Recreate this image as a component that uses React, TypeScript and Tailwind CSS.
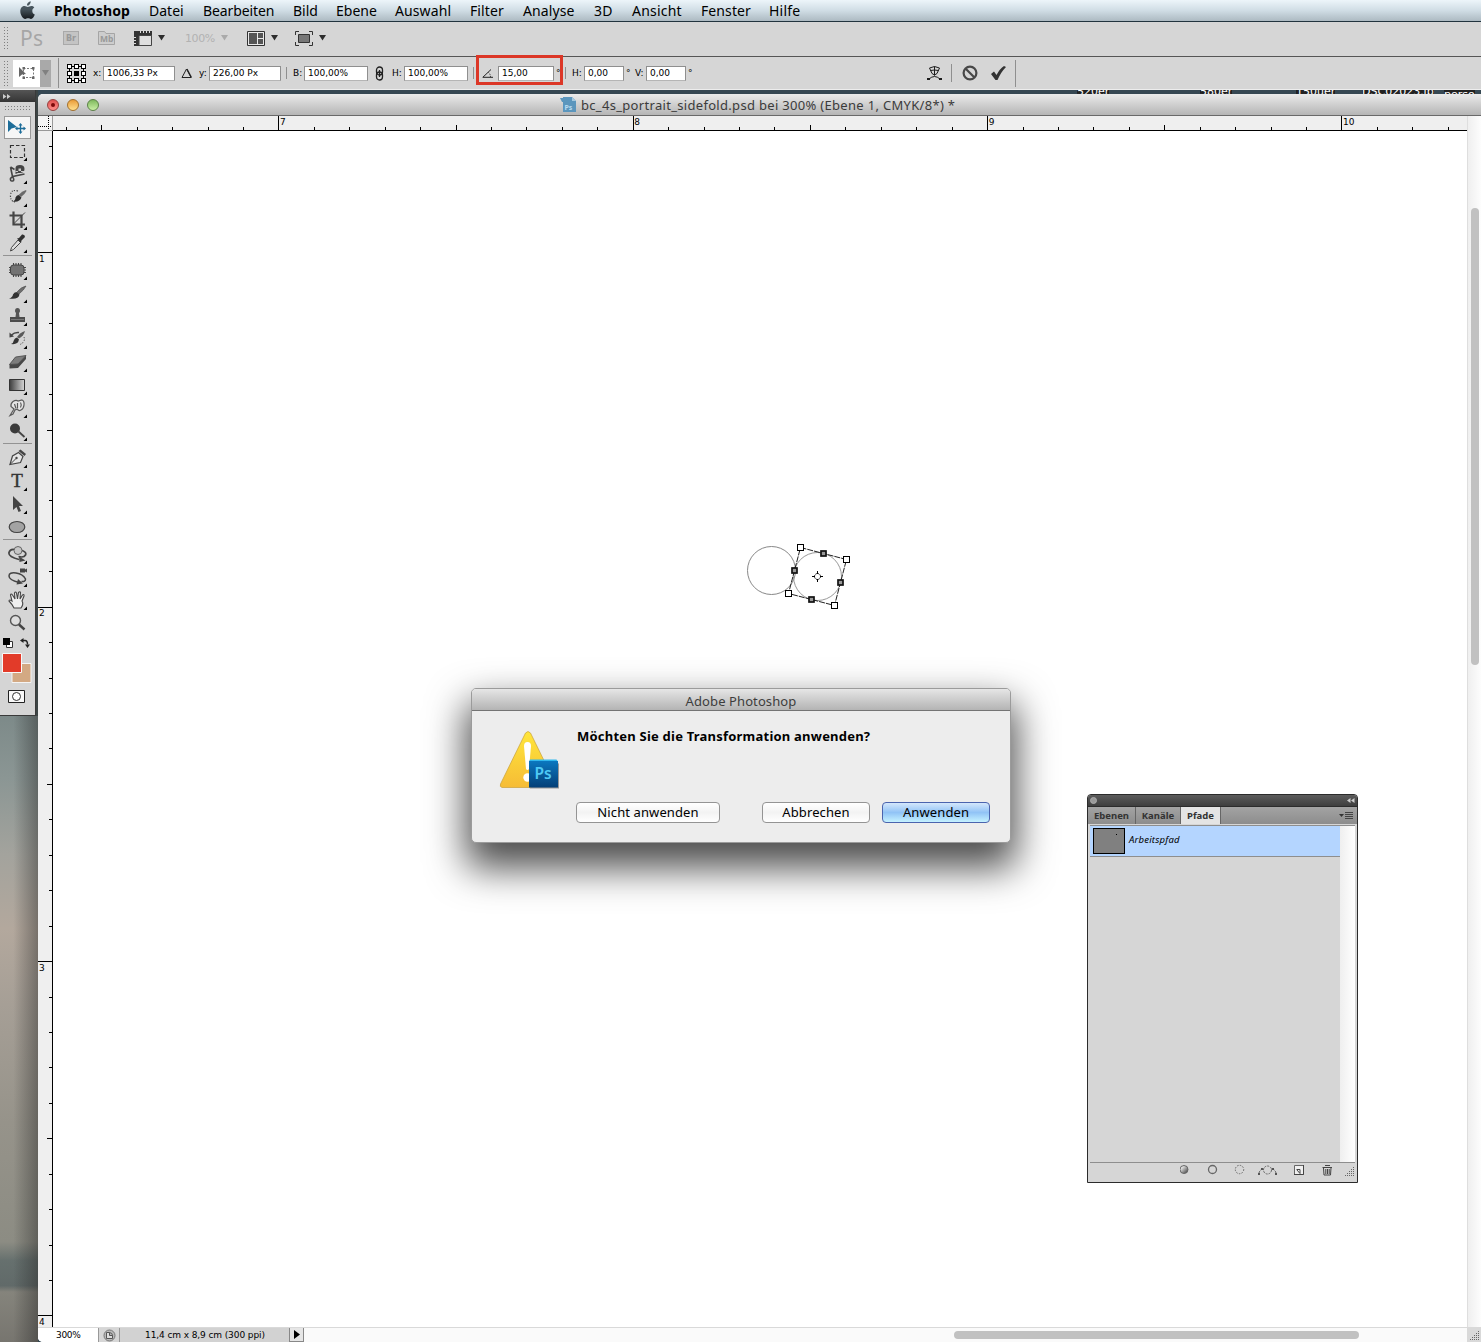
import React from 'react';

const MENU_ITEMS = [
  { label: 'Photoshop', width: 'w-[76px] font-bold tracking-[0.1px]' },
  { label: 'Datei', width: 'w-[35px]' },
  { label: 'Bearbeiten', width: 'w-[71px] tracking-[-0.1px]' },
  { label: 'Bild', width: 'w-[24px]' },
  { label: 'Ebene', width: 'w-[40px]' },
  { label: 'Auswahl', width: 'w-[56px] tracking-[0.1px]' },
  { label: 'Filter', width: 'w-[34px] tracking-[0.1px]' },
  { label: 'Analyse', width: 'w-[52px] tracking-[0.1px]' },
  { label: '3D', width: 'w-[19px] tracking-[0.3px]' },
  { label: 'Ansicht', width: 'w-[50px] tracking-[0.2px]' },
  { label: 'Fenster', width: 'w-[49px] tracking-[0.1px]' },
  { label: 'Hilfe', width: 'w-[31px] tracking-[0.2px]' },
];

const SMALL = "font-['DejaVu_Sans','Liberation_Sans',sans-serif]";

function MenuBar() {
  return (
    <header className="flex h-[22px] shrink-0 items-center border-b border-[#22343f] bg-linear-to-b from-[#edf5fa] via-[#d0dde5] to-[#adbac2] pl-[19px]">
      <svg className="mr-[18px] h-[19px] w-[17px]" viewBox="0 0 17 19">
        <defs>
          <linearGradient id="apple" x1="0" y1="0" x2="0" y2="1">
            <stop offset="0" stopColor="#4b5960" />
            <stop offset=".45" stopColor="#46545c" />
            <stop offset="1" stopColor="#15191c" />
          </linearGradient>
        </defs>
        <path
          fill="url(#apple)"
          d="M11.700.3c.1 1.200-.4 2.300-1.100 3.100-.7.800-1.700 1.300-2.600 1.200-.1-1.100.4-2.200 1-2.900C9.700.9 10.800.4 11.700.3zM15.300 6.500c-1.300.8-2 1.900-2 3.400 0 1.700 1 3 2.500 3.600-.6 1.900-2.200 4.500-3.800 4.500-1.100 0-1.500-.7-2.900-.7s-1.900.7-2.900.7C4 18 1.300 14 1.300 10.300c0-3.400 2.200-5.200 4.200-5.200 1.300 0 2.500.9 3.300.9.800 0 2.100-1 3.700-1 .8 0 2.100.3 2.800 1.500z"
        />
      </svg>
      <nav className="flex gap-[19px] text-[14px] leading-[21px] text-black">
        {MENU_ITEMS.map((item) => (
          <span key={item.label} className={`whitespace-nowrap ${item.width}`}>
            {item.label}
          </span>
        ))}
      </nav>
    </header>
  );
}

function Grip({ className }: { className: string }) {
  return (
    <div
      className={`bg-[radial-gradient(#808080_0.6px,transparent_0.9px)] bg-[size:3px_3px] ${className}`}
    />
  );
}

function DropArrow({ className = 'fill-[#2e2e2e]' }: { className?: string }) {
  return (
    <svg className={`h-[6px] w-[7px] ${className}`} viewBox="0 0 7 6">
      <path d="M0 0h7L3.500 5.500z" />
    </svg>
  );
}

function AppBar() {
  return (
    <div className="flex h-[35px] shrink-0 items-center border-b border-[#565656] bg-[#d6d6d6] pb-[2px]">
      <Grip className="ml-[3px] h-[24px] w-[6px]" />
      <span className="ml-[11px] w-[43px] text-[21px] leading-[30px] tracking-[0.3px] text-[#a6a6a6]">Ps</span>
      <span className={`flex h-[14px] w-[16px] items-center justify-center border border-[#a9a9a9] bg-[#c4c4c4] pt-px text-[8px] font-bold text-[#999] ${SMALL}`}>
        Br
      </span>
      <svg className="ml-[18px] h-[16px] w-[19px]" viewBox="0 0 19 16">
        <path d="M1.500 14.500v-13h6l1.500 2h8.500v11z" fill="#cdcdcd" stroke="#a5a5a5" />
        <text x="3" y="12" fontSize="8.500" fontWeight="bold" fill="#999">Mb</text>
      </svg>
      <svg className="ml-[18px] h-[15px] w-[19px]" viewBox="0 0 19 15">
        <path d="M0 0h18v5H5v10H0z" fill="#333" />
        <path d="M5 4.500h12.500v10H5z" fill="#dedede" stroke="#444" />
        <path d="M6.500 0v2M9.500 0v2M12.500 0v2M15.500 0v2M0 6.500h2M0 9.500h2M0 12.500h2" stroke="#ddd" />
      </svg>
      <span className="ml-[5px] flex w-[27px]"><DropArrow /></span>
      <span className={`w-[36px] pt-[2px] text-[11px] tracking-[-0.4px] text-[#b2b2b2] ${SMALL}`}>100%</span>
      <span className="flex w-[26px]"><DropArrow className="fill-[#aaa]" /></span>
      <svg className="h-[15px] w-[18px]" viewBox="0 0 18 15">
        <path d="M.5.5h17v14H.5z" fill="#e9e9e9" stroke="#333" />
        <path d="M2 2h8v11H2zM11 2h5v5h-5zM11 8h5v5h-5z" fill="#555" />
      </svg>
      <span className="ml-[6px] flex w-[24px]"><DropArrow /></span>
      <svg className="h-[15px] w-[18px]" viewBox="0 0 18 15">
        <path d="M.5 4V.5H4M14 .5h3.500V4M17.500 11v3.500H14M4 14.500H.5V11" fill="none" stroke="#333" />
        <path d="M3.500 3.500h11v8h-11z" fill="#777" stroke="#333" />
      </svg>
      <span className="ml-[6px] flex"><DropArrow /></span>
    </div>
  );
}

function Field({ value, className }: { value: string; className: string }) {
  return (
    <span className={`flex h-[15px] items-center border border-[#8f8f8f] border-b-[#b5b5b5] bg-white pt-[2px] pl-[3px] whitespace-nowrap text-black ${className}`}>
      {value}
    </span>
  );
}

function Divider({ className }: { className: string }) {
  return <span className={`w-px bg-[#8f8f8f] ${className}`} />;
}

const HANDLES = [
  [0, 0], [7, 0], [14, 0],
  [0, 7], [14, 7],
  [0, 14], [7, 14], [14, 14],
];

function OptionsBar() {
  return (
    <div className={`relative flex h-[33px] shrink-0 items-center border-b border-[#ededed] bg-[#d6d6d6] text-[9px] text-black ${SMALL}`}>
      <Grip className="ml-[3px] h-[27px] w-[6px]" />
      <div className="ml-[4px] flex h-[27px] w-[38px]">
        <div className="flex w-[27px] items-center justify-center bg-white">
          <svg className="h-[14px] w-[18px]" viewBox="0 0 18 14">
            <path d="M5.500 2.500h10v9h-10z" fill="none" stroke="#777" strokeDasharray="2 1.500" />
            <path d="M4.500 1h2.500v2.500H4.500zM14 1h2.500v2.500H14zM4.500 10.500h2.500v2.500H4.500zM14 10.500h2.500v2.500H14z" fill="#666" />
            <path d="M1 1v10l3-2.500 4-.5z" fill="#666" />
          </svg>
        </div>
        <div className="flex w-[11px] items-center justify-center bg-[#a9a9a9]">
          <DropArrow className="w-[5px] fill-[#808080]" />
        </div>
      </div>
      <Divider className="ml-[7px] h-[30px]" />
      <svg className="ml-[8px] h-[19px] w-[19px]" viewBox="0 0 19 19">
        <path d="M2.500 2.500h14v14h-14z" fill="none" stroke="#000" />
        {HANDLES.map(([x, y]) => (
          <rect key={`${x}-${y}`} x={x + 0.5} y={y + 0.5} width="4" height="4" fill="#fff" stroke="#000" />
        ))}
        <path d="M7 7h5v5H7z" />
      </svg>
      <span className="w-[17px] pt-px pl-[7px]">x:</span>
      <Field value="1006,33 Px" className="w-[72px]" />
      <span className="flex w-[24px] pl-[6px]">
        <svg className="h-[11px] w-[12px]" viewBox="0 0 12 11">
          <path d="M5.500 1L1 9.500h9z" fill="none" stroke="#222" />
          <path d="M6 1l4.500 8.500" stroke="#222" strokeWidth="1.200" />
        </svg>
      </span>
      <span className="w-[10px] pt-px">y:</span>
      <Field value="226,00 Px" className="w-[72px]" />
      <Divider className="ml-[5px] h-[12px]" />
      <span className="w-[17px] pt-px pl-[6px]">B:</span>
      <Field value="100,00%" className="w-[64px]" />
      <span className="flex w-[24px] pl-[7px]">
        <svg className="h-[15px] w-[9px]" viewBox="0 0 9 15">
          <rect x="1.500" y="1" width="6" height="8" rx="3" fill="none" stroke="#222" strokeWidth="1.300" />
          <rect x="1.500" y="6" width="6" height="8" rx="3" fill="none" stroke="#222" strokeWidth="1.300" />
          <path d="M4.500 4v7" stroke="#222" strokeWidth="1.300" />
        </svg>
      </span>
      <span className="w-[12px] pt-px">H:</span>
      <Field value="100,00%" className="w-[64px]" />
      <Divider className="ml-[5px] h-[12px]" />
      <svg className="ml-[8px] h-[9px] w-[12px]" viewBox="0 0 12 9">
        <path d="M9 .5L.8 8.300H11" fill="none" stroke="#222" />
        <path d="M6.500 3.500q2 1.500 2 5" fill="none" stroke="#222" strokeDasharray="1 1" />
      </svg>
      <Field value="15,00" className="ml-[4px] w-[56px]" />
      <span className="w-[11px] pt-px pl-[2px]">°</span>
      <Divider className="h-[12px]" />
      <span className="w-[18px] pt-px pl-[6px]">H:</span>
      <Field value="0,00" className="w-[40px]" />
      <span className="w-[11px] pt-px pl-[2px]">°</span>
      <span className="w-[11px] pt-px">V:</span>
      <Field value="0,00" className="w-[40px]" />
      <span className="w-[241px] pt-px pl-[2px]">°</span>
      <svg className="h-[16px] w-[15px]" viewBox="0 0 15 16" fill="none" stroke="#1c1c1c">
        <path d="M2.500 3Q7.500 0 12.500 3L10 8.500 7.500 10 5 8.500zM7.500 1.500v9M3.500 5.500Q7.500 4.500 11.500 5.500" />
        <path d="M2 14Q7.500 9 13 14" />
        <path d="M0 13h3v2H0zM12 13h3v2h-3z" fill="#1c1c1c" stroke="none" />
      </svg>
      <Divider className="ml-[9px] h-[18px]" />
      <svg className="ml-[10px] h-[16px] w-[16px]" viewBox="0 0 16 16">
        <circle cx="8" cy="8" r="6.400" fill="none" stroke="#484848" strokeWidth="2.200" />
        <path d="M3.500 3.500l9 9" stroke="#484848" strokeWidth="2.200" />
      </svg>
      <svg className="ml-[12px] h-[16px] w-[17px]" viewBox="0 0 17 16">
        <path d="M1 9l3-2.500L6.500 10Q10 3.500 14 1l2 1Q11 7 7.500 15H5.500z" fill="#333" />
      </svg>
      <Divider className="ml-[8px] h-[27px]" />
      {/* highlight around the angle input */}
      <div className="absolute top-[-2px] left-[476px] h-[30px] w-[87px] border-[3px] border-[#dc3727]" />
    </div>
  );
}

function DesktopPeek() {
  return (
    <div className={`flex h-[4px] w-full overflow-hidden bg-[#364853] pl-[1039px] text-[11px] leading-[12px] text-white ${SMALL}`}>
      <span className="-mt-[4px] h-[12px] w-[123px]"><span className="bg-[#222]">520er</span></span>
      <span className="-mt-[4px] h-[12px] w-[96px]"><span className="bg-[#222]">580er</span></span>
      <span className="-mt-[4px] h-[12px] w-[66px]"><span className="bg-[#222]">150uer</span></span>
      <span className="-mt-[4px] h-[12px] w-[82px]"><span className="bg-[#222]">DSC02023.jp</span></span>
      <span className="-mt-[1px] h-[12px]"><span className="bg-[#222]">perso</span></span>
    </div>
  );
}

const D = '#454545';

// glyphs share a 22x22 grid
const TOOL_GROUPS: { name: string; art: React.ReactNode; plain?: boolean }[][] = [
  [
    {
      name: 'move',
      plain: true,
      art: (
        <>
          <path d="M3 3v12l3.500-3.500L12 10z" fill="#1d6d99" />
          <path d="M15.500 7.500v8M11.500 11.500h8" stroke="#1d6d99" strokeWidth="1.300" />
          <path d="M15.500 6l2 2.500h-4zM15.500 17l2-2.500h-4zM10 11.500l2.500-2v4zM21 11.500l-2.500-2v4z" fill="#1d6d99" />
        </>
      ),
    },
    { name: 'marquee', art: <path d="M4.500 5.500h14v12h-14z" fill="none" stroke="#333" strokeWidth="1.200" strokeDasharray="3.500 2" /> },
    {
      name: 'lasso',
      art: (
        <>
          <path d="M4.500 4l4 2.500M4.500 4l2 9.500 12-2.500M6.500 13.500l-2 2q-.5 3 2 2.500t0-4.500" fill="none" stroke={D} strokeWidth="1.600" />
          <path d="M9.500 11V5q0-3 4.500-3t4.500 4-4.500 4H12z" fill={D} />
          <path d="M12.500 8V5.500h2.500V8z" fill="#ccc" />
          <path d="M9.500 8.500h2.500M15 8.500h3" stroke="#ccc" />
        </>
      ),
    },
    {
      name: 'quick selection',
      art: (
        <>
          <path d="M12 5q-7-2-7.500 4T9 16" fill="none" stroke={D} strokeWidth="1.200" strokeDasharray="1.200 1.400" />
          <path d="M20 4q-4 1-7.500 5l2.500 2q4-3 5.500-6z" fill="#6a6a6a" />
          <path d="M12.500 9l3 2.500q-1.500 5-9 4 3-1 3-4 1-2.500 3-2.500z" fill="#2e2e2e" />
        </>
      ),
    },
    {
      name: 'crop',
      art: (
        <>
          <path d="M7.500 2.500v13H19M3.500 6.500h12V19" fill="none" stroke={D} strokeWidth="2.200" />
          <path d="M7.500 15L19 3.500" stroke={D} />
        </>
      ),
    },
    {
      name: 'eyedropper',
      art: (
        <>
          <path d="M12 8l2.500 2.500-7 7-3 1.500 1-3.500z" fill="#ddd" stroke={D} />
          <path d="M11 6.500l2-.5 3-3.500q3-.5 3 2.500L15.500 8.500l-.5 2.500z" fill="#303030" />
        </>
      ),
    },
  ],
  [
    {
      name: 'patch',
      art: (
        <>
          <path d="M7.500 4v14M10 4v14M12.500 4v14M15 4v14M3 8.500h17M3 11h17M3 13.500h17" stroke={D} strokeWidth="1.100" />
          <rect x="4.500" y="6" width="13.500" height="10" rx="3" fill="#737373" stroke="#444" />
        </>
      ),
    },
    {
      name: 'brush',
      art: (
        <>
          <path d="M20 4q-5 1-9 6l2 2q5-4 7-8z" fill="#6d6d6d" stroke={D} strokeWidth=".6" />
          <path d="M10.500 10l3 2.500q-1 5.500-10.500 4 3.500-1 4-4 1-2.500 3.500-2.500z" fill="#333" />
        </>
      ),
    },
    {
      name: 'stamp',
      art: (
        <>
          <path d="M9 6q0-3 2.500-3T14 6q0 1-1 2l.5 4h-4L10 8Q9 7 9 6z" fill="#555" />
          <path d="M4 12h15v5H4z" fill="#4c4c4c" />
          <path d="M5 14.500h13" stroke="#777" />
        </>
      ),
    },
    {
      name: 'history brush',
      art: (
        <>
          <path d="M19 3q-5 1.500-8 6l2 1.500q5-3 6-7.500z" fill="#5a5a5a" />
          <path d="M11 9.500l2 2q-1 5.500-8 4.500 2.500-1 3-4 .5-2 3-2.500z" fill="#333" />
          <path d="M5.500 7q3-3 7.500-2.500" fill="none" stroke={D} strokeWidth="1.500" />
          <path d="M3.500 4.500V9.500l4.500-1z" fill={D} />
          <path d="M18 9q2 5-5 8" fill="none" stroke={D} strokeDasharray="1.200 1.500" />
        </>
      ),
    },
    {
      name: 'eraser',
      art: (
        <>
          <path d="M3.500 13.500L9.500 6 20 4.500 12 13z" fill="#7d7d7d" stroke={D} strokeWidth=".8" />
          <path d="M3.500 13.500L12 13v4l-8.500.5zM12 13l8-8.500V8l-8 9z" fill="#484848" />
        </>
      ),
    },
    { name: 'gradient', art: <path d="M3.500 5.500h15v11h-15z" fill="url(#toolGradient)" stroke="#333" /> },
    {
      name: 'smudge',
      art: (
        <path
          d="M4 18.500L8 12 5 9.500q-.5-3 2-5Q10 2.500 12 4l4-1q2.500 1 2 5-.5 4-3 5-2.500 1.500-3.500-1L9 13l-2 4zM8.500 7l1.500 4.500M11.500 6v5M14.500 5.500q1.500 2.500 0 5"
          fill="#e6e6e6"
          stroke="#5a5a5a"
          strokeWidth="1.200"
        />
      ),
    },
    {
      name: 'burn',
      art: (
        <>
          <circle cx="9" cy="8.500" r="5" fill="#3b3b3b" />
          <path d="M12.500 11.500l6 5.500" stroke={D} strokeWidth="1.800" />
        </>
      ),
    },
  ],
  [
    {
      name: 'pen',
      art: (
        <>
          <path d="M4 17.500L6.500 9l6-3.500 4.500 4-2.500 6z" fill="#e6e6e6" stroke={D} strokeWidth="1.200" />
          <path d="M4 17.500l6-6" stroke={D} />
          <circle cx="10.500" cy="11" r="1.200" fill={D} />
          <path d="M12.500 4l2-1.500L20 7l-1.500 2z" fill={D} />
        </>
      ),
    },
    {
      name: 'type',
      art: <text x="11" y="17" textAnchor="middle" fontFamily="Liberation Serif, serif" fontSize="19" fill="#333" stroke="#333" strokeWidth=".4">T</text>,
    },
    { name: 'path selection', art: <path d="M7 3v14l3.500-3 2 5 2.500-1-2-5H17z" fill="#444" /> },
    { name: 'ellipse', art: <ellipse cx="11" cy="11" rx="7.800" ry="5.500" fill="#a3a3a3" stroke="#444" strokeWidth="1.200" /> },
  ],
  [
    {
      name: 'rotate object',
      art: (
        <>
          <path d="M15 7q6 2 4.500 5t-7 1.500M13 16.500Q2 13.500 3 9.500T9 6.500" fill="none" stroke={D} strokeWidth="1.700" />
          <circle cx="12" cy="7.500" r="4" fill="#c6c6c6" stroke="#666" />
          <path d="M13 13.500l6.500 4-6 1.500z" fill={D} />
        </>
      ),
    },
    {
      name: 'rotate camera',
      art: (
        <>
          <path d="M13 16.500Q3 14 3 10t7-3 9.500 6q0 3-4 2.500" fill="none" stroke={D} strokeWidth="1.500" />
          <path d="M12 13l5 4.500-6.500 1zM14 2.500h5v4h-5zM19 3.500l2-1v4l-2-1z" fill={D} />
        </>
      ),
    },
    {
      name: 'hand',
      art: (
        <path
          d="M8 19q-2-4-5-7 0-2 3 0L4.500 6q.5-2 2 0L9 10 8.500 4q1-2 2 0l1 6 1-6.500q1.500-1.500 2 0L14 10l2.500-4q2-1 1.500 1l-2 5q2 3-1 7z"
          fill="#efefef"
          stroke={D}
          strokeWidth="1.100"
        />
      ),
    },
    {
      name: 'zoom',
      plain: true,
      art: (
        <>
          <circle cx="9.500" cy="8.500" r="5" fill="#dedede" stroke="#555" strokeWidth="1.400" />
          <path d="M13 12.500l5.500 5" stroke="#444" strokeWidth="2.400" />
        </>
      ),
    },
  ],
];

function Toolbox() {
  return (
    <aside className="flex w-[38px] shrink-0 flex-col">
      <div className="flex h-[626px] w-[38px] shrink-0 bg-[#3d4545]">
        <div className="flex w-[36px] flex-col border-r border-b border-[#3a3a3a] bg-[#d5d5d5]">
          <div className="flex h-[12px] w-[35px] shrink-0 items-center bg-linear-to-b from-[#555] to-[#353535] pl-[3px]">
            <svg className="h-[5px] w-[8px] fill-[#ccc]" viewBox="0 0 8 5">
              <path d="M0 0l3.500 2.500L0 5zM4 0l3.500 2.500L4 5z" />
            </svg>
          </div>
          <Grip className="mt-[3px] mb-[5px] ml-[4px] h-[6px] w-[27px]" />
          {TOOL_GROUPS.map((group, i) => (
            <div
              key={i}
              className={`mx-[3px] flex flex-col ${i < 3 ? 'mb-[2px] border-b border-[#939393] pb-[1px]' : ''}`}
            >
              {group.map((tool) => (
                <div
                  key={tool.name}
                  className={`flex h-[23px] items-center ${
                    tool.name === 'move' ? 'mx-[1px] border border-[#999] bg-[#f6f6f6] pl-[2px]' : 'pl-[5px]'
                  }`}
                >
                  <svg className="h-[22px] w-[22px] shrink-0" viewBox="2 0 22 22">
                    <defs>
                      <linearGradient id="toolGradient">
                        <stop offset="0" stopColor="#3c3c3c" />
                        <stop offset="1" stopColor="#d8d8d8" />
                      </linearGradient>
                    </defs>
                    {tool.art}
                    {!tool.plain && <path d="M21 17.500v3.500h-3.500z" fill="#000" />}
                  </svg>
                </div>
              ))}
            </div>
          ))}
          <svg className="ml-[2px] h-[76px] w-[32px] shrink-0" viewBox="2 634 32 76">
            <path d="M6.500 641.500h6v6h-6z" fill="#fff" stroke="#333" />
            <path d="M3 638h7v7H3z" />
            <path d="M22 640.500h3q2.500 0 2.500 4" fill="none" stroke="#222" strokeWidth="1.500" />
            <path d="M20 640.500l3.500-2.500v5zM27.500 648l-2.500-3.500h5z" fill="#222" />
            <path d="M12 663.500h19v19H12z" fill="#d3a983" stroke="#f4f4f4" />
            <path d="M2.500 653.500h19v19h-19z" fill="#e23b29" stroke="#f8f8f8" />
            <path d="M8.500 690.500h16v12h-16z" fill="#f8f8f8" stroke="#222" />
            <circle cx="16.500" cy="696.500" r="4" fill="#fff" stroke="#333" />
          </svg>
        </div>
      </div>
      <div className="h-full bg-[linear-gradient(90deg,transparent_35%,rgba(30,30,30,.4)),linear-gradient(#7d8a89,#8b9694_10%,#a3a39d_22%,#b3a89d_34%,#a69f96_46%,#96938a_65%,#8c8c83_84%,#66706e_87%,#616a69_91%,#85847c_92%,#77756f)]" />
    </aside>
  );
}

const STEP = 35.435;

function HorizontalRuler() {
  const ticks = Array.from({ length: 40 }, (_, i) => i - 6);
  return (
    <svg className="h-[15px] w-[1414px] bg-[#efefef]" viewBox="53 116 1414 15">
      {ticks.map((i) => {
        const x = Math.round(278.4 + i * STEP) + 0.5;
        const top = i % 10 === 0 ? 116 : i % 5 === 0 ? 125 : 127;
        return <path key={i} d={`M${x} ${top}V131`} stroke="#000" />;
      })}
      <path d="M53 130.500h1414" stroke="#000" />
      {['7', '8', '9', '10'].map((n, i) => (
        <text key={n} x={280 + i * 354.35} y="125" fontSize="9" fontFamily="DejaVu Sans, sans-serif">{n}</text>
      ))}
    </svg>
  );
}

function VerticalRuler() {
  const ticks = Array.from({ length: 34 }, (_, i) => i - 3);
  return (
    <svg className="h-[1196px] w-[15px] bg-[#efefef]" viewBox="38 131 15 1196">
      {ticks.map((i) => {
        const y = Math.round(252.4 + i * STEP) + 0.5;
        const left = i % 10 === 0 ? 38 : i % 5 === 0 ? 47 : 49;
        return <path key={i} d={`M${left} ${y}H53`} stroke="#000" />;
      })}
      <path d="M52.500 131v1196" stroke="#000" />
      {['1', '2', '3', '4'].map((n, i) => (
        <text key={n} x="39" y={262 + i * 354.33} fontSize="9" fontFamily="DejaVu Sans, sans-serif">{n}</text>
      ))}
    </svg>
  );
}

const CORNERS = [[800, 547], [846, 559], [834, 605], [788, 593]];
const MIDPOINTS = [[823, 553], [840, 582], [811, 599], [794, 570]];

function CanvasArtwork() {
  return (
    <svg className="h-[1196px] w-[1414px]" viewBox="53 131 1414 1196" fill="none">
      <circle cx="771.500" cy="570.500" r="24" stroke="#888" />
      <circle cx="817.500" cy="576.500" r="24" stroke="#999" />
      <path d="M800.500 547.500l46 12-12 46-46-12z" stroke="#222" strokeDasharray="6 1" />
      {CORNERS.map(([x, y]) => (
        <rect key={x} x={x - 2.5} y={y - 2.5} width="6" height="6" fill="#fff" stroke="#000" />
      ))}
      {MIDPOINTS.map(([x, y]) => (
        <rect key={x} x={x - 2} y={y - 2} width="5" height="5" fill="#999" stroke="#111" strokeWidth="1.700" />
      ))}
      <circle cx="817.500" cy="576.500" r="3" stroke="#000" strokeDasharray="1.500 .8" />
      <path d="M817.500 571v3M817.500 579v3M812 576.500h3M820 576.500h3" stroke="#000" />
    </svg>
  );
}

function TrafficLight({ color }: { color: string }) {
  return <span className={`flex size-[12px] items-center justify-center rounded-full border ${color}`} />;
}

function DocumentWindow() {
  return (
    <section className="flex w-[1443px] flex-col overflow-hidden rounded-tl-[5px] rounded-bl-[5px] bg-white">
      <div className="flex h-[22px] shrink-0 items-center border-b border-[#696969] bg-linear-to-b from-[#ebebeb] to-[#b5b5b5] pl-[9px]">
        <div className="flex gap-[8px]">
          <span className="flex size-[12px] items-center justify-center rounded-full border border-[#96403f] bg-linear-to-b from-[#e0504f] to-[#ff8d8a]">
            <span className="size-[4px] rounded-full bg-[#7c0a0a]" />
          </span>
          <TrafficLight color="border-[#a3702c] bg-linear-to-b from-[#e99c36] to-[#ffe08c]" />
          <TrafficLight color="border-[#5b8147] bg-linear-to-b from-[#7fb95d] to-[#caf0a5]" />
        </div>
        <svg className="ml-[461px] h-[17px] w-[17px]" viewBox="0 0 17 17">
          <path d="M3 1h9l4 4v11H3z" fill="#5b96bd" />
          <path d="M0 2h4v4H2z" fill="#5b96bd" />
          <path d="M12 1v4h4z" fill="#a5c9df" />
          <text x="4.500" y="13.500" fontSize="7" fontWeight="bold" fill="#b7dbf0">Ps</text>
        </svg>
        <span className="ml-[4px] text-[13px] leading-[20px] tracking-[0.31px] whitespace-nowrap text-[#3b3b3b]">
          bc_4s_portrait_sidefold.psd bei 300% (Ebene 1, CMYK/8*) *
        </span>
      </div>
      <div className="flex h-[1211px] shrink-0">
        <div className="flex w-[15px] flex-col">
          <svg className="h-[15px] w-[15px] bg-[#f4f4f4]" viewBox="0 0 15 15">
            <path d="M10.500 0v15M0 10.500h15" stroke="#000" strokeDasharray="1 1" />
            <path d="M14.500 0v15M0 14.500h15" stroke="#999" />
          </svg>
          <VerticalRuler />
        </div>
        <div className="flex w-[1414px] flex-col">
          <HorizontalRuler />
          <CanvasArtwork />
        </div>
        <div className="w-[14px] border-l border-[#dedede] bg-linear-to-r from-[#efefef] to-[#fdfdfd] pt-[92px] pl-[3px]">
          <div className="h-[457px] w-[8px] rounded-full bg-[#c1c1c1]" />
        </div>
      </div>
      <div className={`flex h-[15px] shrink-0 border-t border-[#d9d9d9] bg-[#fafafa] text-[9px] leading-[14px] text-black ${SMALL}`}>
        <span className="w-[60px] bg-white pl-[18px] tracking-[-0.3px]">300%</span>
        <span className="flex w-[22px] items-center justify-center border-x border-[#999] bg-[#d6d6d6]">
          <svg className="size-[13px]" viewBox="0 0 13 13">
            <circle cx="6.500" cy="6.500" r="5.500" fill="#b9b9b9" stroke="#777" />
            <path d="M3.500 9.500v-6h3q3 .5 3 3v3zM6.500 3.500v3h3" fill="#ddd" stroke="#555" />
          </svg>
        </span>
        <span className="w-[169px] bg-[#d2d2d2] pl-[25px] tracking-[-0.1px]">11,4 cm x 8,9 cm (300 ppi)</span>
        <span className="flex w-[15px] items-center justify-center border border-t-0 border-[#888] bg-[#e6e6e6]">
          <svg className="h-[9px] w-[6px]" viewBox="0 0 6 9"><path d="M0 0l6 4.500L0 9z" /></svg>
        </span>
        <span className="flex w-[1163px] items-center pl-[650px]">
          <span className="h-[8px] w-[405px] rounded-full bg-[#c1c1c1]" />
        </span>
        <span className="flex w-[14px] items-end justify-end bg-[#d9d9d9]"><ResizeCorner /></span>
      </div>
    </section>
  );
}

function ResizeCorner() {
  const dots = [0, 1, 2, 3, 4].flatMap((r) => Array.from({ length: r + 1 }, (_, c) => [8 - c * 2, r * 2]));
  return (
    <svg className="h-[11px] w-[12px]" viewBox="0 0 12 11">
      {dots.map(([x, y]) => (
        <rect key={`${x}-${y}`} x={x + 1} y={y} width="1" height="1" fill="#666" />
      ))}
    </svg>
  );
}

function DialogButton({ label, className }: { label: string; className: string }) {
  return (
    <button className={`flex h-[21px] items-center justify-center rounded-[4px] border text-[13px] leading-[19px] tracking-[0.1px] text-black ${className}`}>
      {label}
    </button>
  );
}

function TransformDialog() {
  const plain = 'border-[#949494] bg-linear-to-b from-white via-[#f3f3f3] to-white';
  return (
    <div className="absolute top-[688px] left-[471px] flex h-[155px] w-[540px] flex-col rounded-[5px] border border-[#9b9b9b] bg-[#ededed] shadow-[0_20px_38px_5px_rgba(0,0,0,0.7)]">
      <div className="flex h-[22px] items-center justify-center rounded-t-[4px] border-b border-[#747474] bg-linear-to-b from-[#e6e6e6] to-[#b4b4b4] pt-[2px] text-[13px] leading-[20px] tracking-[0.1px] text-[#3d3d3d]">
        Adobe Photoshop
      </div>
      <div className="flex pt-[16px] pl-[26px]">
        <svg className="mt-[2px] h-[62px] w-[62px]" viewBox="498 729 62 62">
          <defs>
            <linearGradient id="warn" x1="0" y1="0" x2="0" y2="1">
              <stop offset="0" stopColor="#ffe63b" />
              <stop offset="1" stopColor="#f6bc36" />
            </linearGradient>
            <linearGradient id="psBox" x1="0" y1="0" x2="0" y2="1">
              <stop offset="0" stopColor="#0b77bf" />
              <stop offset="1" stopColor="#043f77" />
            </linearGradient>
          </defs>
          <path d="M525.500 733q2.500-3 5 0L556 785q0 2.500-2.500 2.500H502q-2.500-.5-1.500-3.500z" fill="url(#warn)" stroke="#c9a13a" strokeWidth=".7" />
          <path d="M524 746q0-4 3.500-4t3.500 4l-2 23q-1.500 2-3 0z" fill="#fff" />
          <circle cx="527.500" cy="777.500" r="4.200" fill="#fff" />
          <path d="M529.500 788.500h29.500V763z" fill="#999" />
          <path d="M530 759.500h26.500l1.500 2H529z" fill="#31b8ee" />
          <path d="M529 761h29v26.500H529z" fill="url(#psBox)" />
          <text x="534.500" y="779" fontSize="15.500" fontWeight="600" fontFamily="Noto Sans, sans-serif" fill="#4fc9f5">Ps</text>
        </svg>
        <p className="ml-[17px] text-[13px] leading-[18px] font-bold tracking-[0.22px] text-black">Möchten Sie die Transformation anwenden?</p>
      </div>
      <div className="mt-[11px] flex pl-[104px]">
        <DialogButton label="Nicht anwenden" className={`w-[144px] ${plain}`} />
        <DialogButton label="Abbrechen" className={`ml-[42px] w-[108px] ${plain}`} />
        <DialogButton
          label="Anwenden"
          className="ml-[12px] w-[108px] border-[#4b64ae] bg-linear-to-b from-[#d4e7fb] via-[#91c3f6] to-[#c5f2ff]"
        />
      </div>
    </div>
  );
}

function PathsPanel() {
  return (
    <div className={`absolute top-[794px] left-[1087px] flex h-[389px] w-[271px] flex-col overflow-hidden rounded-t-[4px] border border-[#2b2b2b] bg-[#d6d6d6] ${SMALL}`}>
      <div className="flex h-[12px] shrink-0 items-center justify-between border-b border-[#2b2b2b] bg-linear-to-b from-[#5c5c5c] to-[#3e3e3e] px-[2px]">
        <span className="size-[7px] rounded-full border border-[#aaa] bg-[#999]" />
        <svg className="h-[5px] w-[8px] fill-[#ccc]" viewBox="0 0 8 5">
          <path d="M3.500 0L0 2.500 3.500 5zM7.500 0L4 2.500 7.500 5z" />
        </svg>
      </div>
      <div className="flex h-[17px] shrink-0 bg-linear-to-b from-[#a3a3a3] to-[#8d8d8d] font-['Noto_Sans',sans-serif] text-[9.5px] leading-[17px] font-bold text-[#333]">
        <span className="w-[48px] border-r border-[#666] text-center">Ebenen</span>
        <span className="w-[45px] border-r border-[#666] text-center">Kanäle</span>
        <span className="w-[40px] border-r border-[#666] bg-[#e4e4e4] text-center">Pfade</span>
        <span className="flex flex-1 items-center justify-end pr-[4px]">
          <svg className="h-[8px] w-[14px]" viewBox="0 0 14 8">
            <path d="M0 2h5L2.500 5z" fill="#333" />
            <path d="M6 .5h8M6 2.500h8M6 4.500h8M6 6.500h8" stroke="#444" />
          </svg>
        </span>
      </div>
      <div className="mx-[2px] mt-px flex h-[338px] shrink-0 border-y border-[#8e8e8e]">
        <div className="w-[250px]">
          <div className="flex h-[31px] border-b border-[#8e8e8e] bg-[#b4d5ff] pt-[2px] pl-[3px]">
            <span className="h-[26px] w-[32px] border border-black bg-[#808080] pt-[5px] pl-[22px]">
              <span className="block size-px bg-black" />
            </span>
            <span className="pt-[5px] pl-[4px] font-['Noto_Sans',sans-serif] text-[9.5px] leading-[13px] tracking-[0.2px] text-black italic">Arbeitspfad</span>
          </div>
        </div>
        <div className="flex-1 bg-linear-to-r from-[#efefef] to-white" />
      </div>
      <svg className="ml-[92px] h-[16px] w-[162px] shrink-0" viewBox="1180 1163 162 16" fill="none" stroke="#666">
        <defs>
          <linearGradient id="ball" x1="0" y1="0" x2="1" y2="1">
            <stop offset=".2" stopColor="#eee" />
            <stop offset="1" stopColor="#333" />
          </linearGradient>
        </defs>
        <circle cx="1184" cy="1169.500" r="4" fill="url(#ball)" />
        <circle cx="1212.500" cy="1169.500" r="4" strokeWidth="1.300" />
        <circle cx="1239.500" cy="1169.500" r="4.200" strokeDasharray="1.500 1.300" />
        <circle cx="1267.500" cy="1170" r="4" strokeDasharray="2 1" />
        <path d="M1259 1173q1-4 5-4M1276 1173q-1-4-5-4" strokeDasharray="2 1" />
        <path d="M1258 1173h2v2h-2zM1275 1173h2v2h-2zM1261 1168h2v2h-2zM1272 1168h2v2h-2z" fill="#555" stroke="none" />
        <path d="M1294.500 1165.500h9v9h-9z" fill="#f0f0f0" />
        <path d="M1296.500 1169.500h3.500v4M1297 1170l3 3.500M1303.500 1165v9.500H1294" stroke="#444" />
        <path d="M1323.500 1168l.5 7h6.500l.5-7M1322.500 1167.500h9.500M1325 1165.500h5M1325.800 1169v5M1327.500 1169v5M1329.200 1169v5" stroke="#444" />
      </svg>
      <div className="-mt-[12px] flex justify-end pr-[1px]"><ResizeCorner /></div>
    </div>
  );
}

export default function App() {
  return (
    <div className="relative flex h-[1342px] w-[1481px] flex-col overflow-hidden bg-[#364853] font-['Noto_Sans','Open_Sans',sans-serif]">
      <MenuBar />
      <AppBar />
      <OptionsBar />
      <main className="flex h-[1252px] shrink-0">
        <Toolbox />
        <div className="flex w-[1443px] flex-col">
          <DesktopPeek />
          <DocumentWindow />
        </div>
      </main>
      <TransformDialog />
      <PathsPanel />
    </div>
  );
}
